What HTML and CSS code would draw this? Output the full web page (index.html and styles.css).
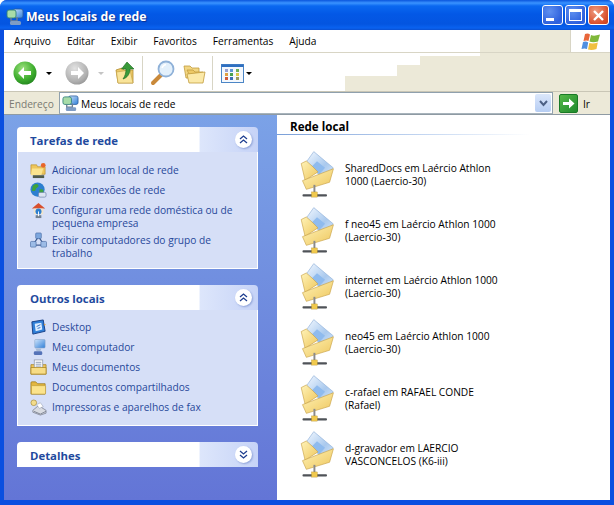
FILE: index.html
```html
<!DOCTYPE html>
<html lang="pt">
<head>
<meta charset="utf-8">
<title>Meus locais de rede</title>
<link rel="stylesheet" href="styles.css">
</head>
<body>
<svg class="defs" width="0" height="0" aria-hidden="true">
  <defs>
    <linearGradient id="fold" x1="0" y1="0" x2="1" y2="1"><stop offset="0" stop-color="#fff3b8"/><stop offset="1" stop-color="#eec65c"/></linearGradient>
    <linearGradient id="paper" x1="0" y1="0" x2="1" y2="1"><stop offset="0" stop-color="#f4f9ff"/><stop offset=".6" stop-color="#a9c9ee"/><stop offset="1" stop-color="#d8e8fa"/></linearGradient>
    <radialGradient id="green" cx=".4" cy=".3" r=".8"><stop offset="0" stop-color="#9be07c"/><stop offset=".6" stop-color="#3fae2e"/><stop offset="1" stop-color="#1d7d1c"/></radialGradient>
    <radialGradient id="grey" cx=".4" cy=".3" r=".8"><stop offset="0" stop-color="#e2e2e2"/><stop offset=".7" stop-color="#b0b0b0"/><stop offset="1" stop-color="#8e8e8e"/></radialGradient>
    <linearGradient id="scr" x1="0" y1="0" x2="1" y2="1"><stop offset="0" stop-color="#cfe4fb"/><stop offset="1" stop-color="#2f7fd8"/></linearGradient>

    <symbol id="net-folder" viewBox="30 10 110 155">
      <path d="M75 15 135 65 105 98 50 50Z" fill="url(#paper)" stroke="#8fb0d8" stroke-width="2"/>
      <path d="M85 45 110 65 92 85 68 62Z" fill="#8fbbee"/>
      <path d="M36 52 52 44 72 62 88 78 48 104Z" fill="url(#fold)" stroke="#c9a246" stroke-width="2"/>
      <path d="M40 105 136 68 124 110 52 132Z" fill="url(#fold)" stroke="#c9a246" stroke-width="2"/>
      <rect x="74" y="118" width="6" height="30" fill="#8a8a8a"/>
      <rect x="40" y="147" width="76" height="7" rx="3" fill="#4f5358"/>
      <rect x="68" y="140" width="18" height="16" fill="#f0c94e" stroke="#a98420"/>
    </symbol>

    <symbol id="net-places" viewBox="0 0 18 18">
      <rect x="7" y="1" width="10" height="9" rx="2" fill="url(#scr)" stroke="#2a5a9a" stroke-width=".8"/>
      <rect x="1" y="2" width="9" height="8" rx="2" fill="#a8dca8" stroke="#2f7f7a" stroke-width=".9"/>
      <path d="M5 10v3h6V9" stroke="#6d7f90" stroke-width="1.400" fill="none"/>
      <rect x="4" y="13" width="11" height="4" rx="1.500" fill="#7f9cc4"/>
    </symbol>

    <symbol id="i-add" viewBox="0 0 18 18">
      <path d="M1 3h6l1 2h8v8H1Z" fill="#eec65c" stroke="#b98f2a" stroke-width=".7"/>
      <path d="M2 7h12l-2 7H1Z" fill="#fbe48f"/>
      <circle cx="14" cy="3.500" r="2.500" fill="#e8662a"/>
      <rect x="3" y="14" width="12" height="3" fill="#4f5a4a"/>
    </symbol>
    <symbol id="i-conn" viewBox="0 0 18 18">
      <circle cx="8" cy="8" r="7.500" fill="#2d7fd0"/>
      <path d="M3 4c3-3 6-2 6 0s-3 2-3 4-3 2-4 1ZM10 8c3-1 5 0 4 3s-3 3-4 1Z" fill="#3fa33a"/>
      <rect x="9" y="11" width="8" height="5" rx="1.500" fill="#dbe4f2" stroke="#6b7ea5" stroke-width=".7"/>
    </symbol>
    <symbol id="i-home" viewBox="0 0 18 18">
      <path d="M9 1 16 7H2Z" fill="#d8502e"/>
      <rect x="4" y="7" width="10" height="6" fill="#f2e4c8"/>
      <circle cx="9" cy="10" r="3.200" fill="#2d7fd0"/>
      <rect x="6" y="14" width="6" height="3" fill="#72808f"/>
      <path d="M9 10v5" stroke="#fff"/>
    </symbol>
    <symbol id="i-group" viewBox="0 0 18 18">
      <path d="M9 5 3.500 13M9 5l5.500 8M4 14h10" stroke="#415e92" stroke-width="1.300"/>
      <rect x="6" y="1" width="6" height="6" rx="1" fill="#7da7de" stroke="#3d5f9a" stroke-width=".6"/>
      <rect x="0.500" y="10" width="6" height="6" rx="1" fill="#9cbbe6" stroke="#3d5f9a" stroke-width=".6"/>
      <rect x="11.500" y="10" width="6" height="6" rx="1" fill="#9cbbe6" stroke="#3d5f9a" stroke-width=".6"/>
    </symbol>
    <symbol id="i-desk" viewBox="0 0 18 18">
      <path d="M2 3 14 1 16 13 3 16Z" fill="#2f7fd8" stroke="#173f86"/>
      <path d="M5 5 12 4 13 11 6 13Z" fill="#dcecff"/>
      <path d="M7 8 11 6M8 10l3-1" stroke="#2f6fc0"/>
      <path d="m15 5 2 1-2 1Z" fill="#e8a02a"/>
    </symbol>
    <symbol id="i-pc" viewBox="0 0 18 18">
      <rect x="5" y="0.500" width="11" height="9" rx="1" fill="url(#scr)" stroke="#8ba6c8" stroke-width=".6"/>
      <path d="M6 10h6l-1 3H7Z" fill="#a9bcd6"/>
      <rect x="4" y="13" width="9" height="4" rx="1.500" fill="#5573b8"/>
    </symbol>
    <symbol id="i-docs" viewBox="0 0 18 18">
      <path d="M1 6h16v10H1Z" fill="#eec65c" stroke="#a98420" stroke-width=".8"/>
      <rect x="4.500" y="1" width="9" height="9" fill="#fff" stroke="#8d96a8" stroke-width=".8"/>
      <path d="M6 3.500h6M6 5.500h6M6 7.500h6" stroke="#6d7f9f" stroke-width=".8"/>
      <path d="M1 9h16v7H1Z" fill="#f7dc85" stroke="#a98420" stroke-width=".8"/>
    </symbol>
    <symbol id="i-shared" viewBox="0 0 18 18">
      <path d="M1 4q0-1 1-1h4l2 2h8v11H1Z" fill="#e3b640" stroke="#9c7a1c" stroke-width=".8"/>
      <rect x="1.500" y="7" width="15" height="9" rx="1" fill="#fbe38c" stroke="#b48f28" stroke-width=".6"/>
    </symbol>
    <symbol id="i-print" viewBox="0 0 18 18">
      <circle cx="4" cy="4" r="3" fill="#f3dc8c" stroke="#a48a3a" stroke-width=".7"/>
      <path d="M3 12 9 7l8 5v3l-6 2-8-3Z" fill="#d8dbe2" stroke="#6d7483" stroke-width=".7"/>
      <path d="M7 6l4-2 3 4-4 2Z" fill="#fff" stroke="#8a92a3" stroke-width=".5"/>
      <path d="M4 13l7 3 6-3" fill="none" stroke="#7d8595"/>
    </symbol>
  </defs>
</svg>

<div class="window">
  <header class="titlebar">
    <svg class="title-icon"><use href="#net-places"/></svg>
    <span class="title-text">Meus locais de rede</span>
    <div class="caption-buttons">
      <button class="cap cap-min" aria-label="Minimizar"><span class="min-bar"></span></button>
      <button class="cap cap-max" aria-label="Maximizar"><span class="max-box"></span></button>
      <button class="cap cap-close" aria-label="Fechar">
        <svg width="13" height="13" viewBox="0 0 13 13"><path d="M2 2 11 11M11 2 2 11" stroke="#fff" stroke-width="2.400"/></svg>
      </button>
    </div>
  </header>

  <div class="inner">
    <nav class="menubar">
      <ul class="menu">
        <li>Arquivo</li><li>Editar</li><li>Exibir</li><li>Favoritos</li><li>Ferramentas</li><li>Ajuda</li>
      </ul>
      <div class="logo">
        <svg width="21" height="18" viewBox="0 0 21 18">
          <path d="M5 1Q8 0 10 1.500L8.500 8Q6.500 7 3.500 8Z" fill="#e8663a"/>
          <path d="M11 2Q14 3.500 20 1.500L18 8.500Q13 10 9.500 8.500Z" fill="#7fb83a"/>
          <path d="M3 9Q6 8 8.200 9.500L7 16Q4.500 15 1.500 16Z" fill="#4f8fe0"/>
          <path d="M9.300 10Q13 11 17.800 9.500L16.500 16Q12 17.500 8 16.500Z" fill="#f0c040"/>
        </svg>
      </div>
    </nav>

    <div class="toolbar">
      <svg class="tb-back" width="24" height="24" viewBox="0 0 24 24">
        <circle cx="12" cy="12" r="11.500" fill="url(#green)"/>
        <path d="M5 12 11 6v4h7v4h-7v4Z" fill="#fff"/>
      </svg>
      <span class="caret"></span>
      <svg class="tb-fwd" width="24" height="24" viewBox="0 0 24 24">
        <circle cx="12" cy="12" r="11.500" fill="url(#grey)"/>
        <path d="M19 12 13 6v4H6v4h7v4Z" fill="#fff"/>
      </svg>
      <span class="caret caret-off"></span>
      <svg class="tb-up" width="20" height="24" viewBox="0 0 20 24">
        <path d="M1 9 7 7l2 2h9v13H3Z" fill="#edc967" stroke="#b38d30" stroke-width=".8"/>
        <path d="M1.500 11 15 9l3 13H3Z" fill="#f9e49a" stroke="#c39f41" stroke-width=".6"/>
        <path d="M12 1 19 8h-4c0 5-3 9-7 10 2-3 3-6 3-10H6.500Z" fill="#3a9a3a" stroke="#17661b" stroke-width=".6"/>
      </svg>
      <span class="sep"></span>
      <svg class="tb-search" width="26" height="26" viewBox="0 0 26 26">
        <path d="M11 15 3 23" stroke="#c9893a" stroke-width="4" stroke-linecap="round"/>
        <circle cx="16" cy="9" r="7.500" fill="#e3f0fb" stroke="#8fb1d8" stroke-width="1.800"/>
        <path d="M12 8q1-3 4-3.500" stroke="#fff" stroke-width="1.500" fill="none"/>
      </svg>
      <svg class="tb-folders" width="23" height="20" viewBox="0 0 23 20">
        <path d="M1 2h6l2 2h7v10H3Z" fill="#f2d682" stroke="#c19c3e" stroke-width=".8"/>
        <path d="M4 6h6l2 2h8v2H6Z" fill="#edc967" stroke="#c19c3e" stroke-width=".8"/>
        <path d="M4 10 22 8l-2 11H6Z" fill="#fbe9a8" stroke="#c19c3e" stroke-width=".8"/>
      </svg>
      <span class="sep sep-2"></span>
      <svg class="tb-views" width="23" height="19" viewBox="0 0 23 19">
        <rect x=".5" y=".5" width="22" height="18" fill="#f4f8fd" stroke="#4c86c6"/>
        <rect x=".5" y=".5" width="22" height="2.500" fill="#2e6fc0"/>
        <rect x="4" y="5" width="3" height="3" fill="#9a9fd0"/><rect x="9" y="5" width="3" height="3" fill="#5f97d8"/><rect x="15" y="5" width="3" height="3" fill="#6dae5a"/>
        <rect x="4" y="9" width="3" height="3" fill="#e0a040"/><rect x="9" y="9" width="3" height="3" fill="#45a050"/><rect x="15" y="9" width="3" height="3" fill="#d9c84a"/>
        <rect x="4" y="13" width="3" height="3" fill="#d05a3a"/><rect x="9" y="13" width="3" height="3" fill="#3b6fb8"/><rect x="15" y="13" width="3" height="3" fill="#9a9a60"/>
      </svg>
      <span class="caret caret-views"></span>
    </div>

    <div class="addressbar">
      <span class="addr-label">Endereço</span>
      <div class="addr-box">
        <svg class="addr-icon"><use href="#net-places"/></svg>
        <span class="addr-text">Meus locais de rede</span>
        <span class="addr-drop">
          <svg width="9" height="7" viewBox="0 0 9 7"><path d="M1 1 4.500 5 8 1" fill="none" stroke="#4d6185" stroke-width="2"/></svg>
        </span>
      </div>
      <span class="go-btn">
        <svg width="13" height="13" viewBox="0 0 13 13"><path d="M1 5h6V1.500L12.500 6.500 7 11.500V8H1Z" fill="#fff"/></svg>
      </span>
      <span class="go-text">Ir</span>
    </div>

    <div class="content">
      <aside class="sidebar">
        <section class="panel">
          <div class="panel-head">
            <h2>Tarefas de rede</h2>
            <span class="chev"><svg width="9" height="9" viewBox="0 0 9 9"><path d="M1 4 4.500 1 8 4M1 8l3.500-3L8 8" fill="none" stroke="#1f3f90" stroke-width="1.300"/></svg></span>
          </div>
          <ul class="panel-body">
            <li><svg class="ico"><use href="#i-add"/></svg><span>Adicionar um local de rede</span></li>
            <li><svg class="ico"><use href="#i-conn"/></svg><span>Exibir conexões de rede</span></li>
            <li><svg class="ico"><use href="#i-home"/></svg><span>Configurar uma rede doméstica ou de pequena empresa</span></li>
            <li><svg class="ico"><use href="#i-group"/></svg><span>Exibir computadores do grupo de trabalho</span></li>
          </ul>
        </section>
        <section class="panel">
          <div class="panel-head">
            <h2>Outros locais</h2>
            <span class="chev"><svg width="9" height="9" viewBox="0 0 9 9"><path d="M1 4 4.500 1 8 4M1 8l3.500-3L8 8" fill="none" stroke="#1f3f90" stroke-width="1.300"/></svg></span>
          </div>
          <ul class="panel-body">
            <li><svg class="ico"><use href="#i-desk"/></svg><span>Desktop</span></li>
            <li><svg class="ico"><use href="#i-pc"/></svg><span>Meu computador</span></li>
            <li><svg class="ico"><use href="#i-docs"/></svg><span>Meus documentos</span></li>
            <li><svg class="ico"><use href="#i-shared"/></svg><span>Documentos compartilhados</span></li>
            <li><svg class="ico"><use href="#i-print"/></svg><span>Impressoras e aparelhos de fax</span></li>
          </ul>
        </section>
        <section class="panel">
          <div class="panel-head">
            <h2>Detalhes</h2>
            <span class="chev"><svg width="9" height="9" viewBox="0 0 9 9"><path d="M1 1l3.500 3L8 1M1 5l3.500 3L8 5" fill="none" stroke="#1f3f90" stroke-width="1.300"/></svg></span>
          </div>
        </section>
      </aside>

      <main class="files">
        <h1 class="group-title">Rede local</h1>
        <div class="group-rule"></div>
        <ul class="file-list">
          <li><svg class="big"><use href="#net-folder"/></svg><span>SharedDocs em Laércio Athlon 1000 (Laercio-30)</span></li>
          <li><svg class="big"><use href="#net-folder"/></svg><span>f neo45 em Laércio Athlon 1000 (Laercio-30)</span></li>
          <li><svg class="big"><use href="#net-folder"/></svg><span>internet em Laércio Athlon 1000 (Laercio-30)</span></li>
          <li><svg class="big"><use href="#net-folder"/></svg><span>neo45 em Laércio Athlon 1000 (Laercio-30)</span></li>
          <li><svg class="big"><use href="#net-folder"/></svg><span>c-rafael em RAFAEL CONDE (Rafael)</span></li>
          <li><svg class="big"><use href="#net-folder"/></svg><span>d-gravador em LAERCIO VASCONCELOS (K6-iii)</span></li>
        </ul>
      </main>
    </div>
  </div>
</div>
</body>
</html>
```

FILE: styles.css
```css
* { box-sizing: border-box; }
html, body { margin: 0; padding: 0; background: #fff; }
body { font-family: "Open Sans", "Noto Sans", "Liberation Sans", sans-serif; font-size: 10.2px; color: #000; overflow: hidden; }
.defs { display: block; height: 0; }
ul { list-style: none; margin: 0; padding: 0; }
h1, h2 { margin: 0; }

.window { width: 614px; height: 505px; display: flex; flex-direction: column; background: #0a4fe0; border-radius: 7px 7px 0 0; overflow: hidden; }

.titlebar { height: 30px; flex: none; display: flex; align-items: center; padding: 3px 5px 0 6px;
  background: linear-gradient(180deg, #0a55dd 0, #3a93ff 3px, #0a68f0 6px, #0358e6 14px, #0455e0 24px, #0a62f0 28px, #0a4fd0 30px); }
.title-icon { width: 18px; height: 18px; flex: none; margin-right: 2px; }
.title-text { font: bold 12.3px "Open Sans", "Noto Sans", sans-serif; color: #fff; text-shadow: 1px 1px 1px #0a2f90; flex: 1; }
.caption-buttons { display: flex; gap: 2px; align-items: center; margin-top: -3px; }
.cap { width: 21px; height: 20px; padding: 0; border: 1px solid #fff; border-radius: 3px; display: flex; align-items: center; justify-content: center; background: radial-gradient(circle at 35% 30%, #5f90f0, #2c5fdc 75%, #3a6ee6); }
.cap-close { background: radial-gradient(circle at 35% 30%, #ee9a80, #d9502c 70%, #c43f1e); }
.min-bar { width: 8px; height: 3px; background: #fff; margin: 9px 6px 0 0; }
.max-box { width: 13px; height: 12px; border: 1px solid #fff; border-top-width: 3px; }

.inner { flex: 1; min-height: 0; margin: 0 4px 5px 4px; display: flex; flex-direction: column; background: #ece9d8; }

.menubar { height: 23px; flex: none; display: flex; justify-content: space-between; border-bottom: 1px solid #d8d5c5;
  background: linear-gradient(#fff, #fff) no-repeat 0 0 / 476px 100%, #ece9d8; }
.menu { display: flex; align-items: center; padding: 0 0 1px 10px; gap: 16px; }
.logo { width: 40px; background: #fff; border-left: 1px solid #d8d5c5; display: flex; align-items: center; justify-content: center; padding-top: 2px; }

.toolbar { height: 39px; flex: none; display: flex; align-items: center; padding: 2px 0 0 9px; border-bottom: 1px solid #c9c6b6;
  background:
    linear-gradient(#fff, #fff) no-repeat 0 0 / 476px 3px,
    linear-gradient(#fff, #fff) no-repeat 0 3px / 416px 9px,
    linear-gradient(#fff, #fff) no-repeat 0 12px / 393px 11px,
    linear-gradient(#fff, #fff) no-repeat 0 23px / 341px 16px,
    #ece9d8; }
.caret { width: 0; height: 0; border: 3px solid transparent; border-top: 3px solid #000; border-bottom: 0; margin: 0 13px 0 9px; }
.caret-off { border-top-color: #c4c4c4; margin: 0 11px 0 9px; }
.caret-views { margin: 0 0 0 2px; }
.tb-up { margin-top: -1px; }
.sep { width: 1px; height: 34px; background: #d8d5c5; margin: 0 7px 0 7px; }
.tb-search { margin-right: 7px; }
.tb-folders { margin-top: 2px; }
.sep-2 { margin: 0 8px 0 6px; }

.addressbar { height: 22px; flex: none; display: flex; align-items: center; padding-left: 5px; background: #ece9d8; }
.addr-label { width: 50px; color: #7a7a72; padding-top: 2px; }
.addr-box { width: 494px; height: 22px; background: #fff; border: 1px solid #8fa0ad; border-bottom-color: #a8b4bc; display: flex; align-items: center; padding: 0 1px 0 2px; }
.addr-icon { width: 17px; height: 17px; margin-right: 2px; flex: none; }
.addr-text { flex: 1; padding-top: 2px; }
.addr-drop { width: 16px; height: 18px; background: linear-gradient(#dbe7fb, #b6cdf3); border-radius: 2px; display: flex; align-items: center; justify-content: center; }
.go-btn { width: 19px; height: 19px; margin-left: 6px; border-radius: 2px; background: linear-gradient(135deg, #55b848, #1f8a2c); border: 1px solid #197a26; display: flex; align-items: center; justify-content: center; }
.go-text { margin-left: 5px; padding-top: 1px; }

.content { flex: 1; min-height: 0; display: flex; border-top: 1px solid #8e9aa3; }
.sidebar { width: 273px; flex: none; padding: 12px 19px 0 13px; display: flex; flex-direction: column; gap: 16px; background: linear-gradient(#7ba2e7, #6375d6); }
.panel-head { height: 25px; padding: 2px 6px 0 13px; display: flex; align-items: center; justify-content: space-between; border-radius: 4px 4px 0 0;
  background: linear-gradient(90deg, #fff 75.500%, #dde6fb 76%, #c6d3f7 100%); }
.panel-head h2 { font: bold 11.4px "Open Sans", "Noto Sans", sans-serif; color: #1f4a9e; }
.chev { width: 17px; height: 17px; border-radius: 50%; background: #fff; box-shadow: 1px 1px 2px #8fa3d8; display: flex; align-items: center; justify-content: center; margin-top: -3px; }
.panel-body { background: #d6dff7; border: 1px solid #fff; border-width: 0 1px 1px; padding: 11px 13px 8px 12px; display: flex; flex-direction: column; gap: 4px; color: #27489a; }
.panel-body li { display: flex; line-height: 13px; min-height: 16px; }
.panel:first-child .panel-body { padding-top: 12px; }
.ico { width: 17px; height: 17px; flex: none; margin: -2px 5px -2px 0; }

.files { flex: 1; background: #fff; min-width: 0; }
.group-title { font: bold 11.600px "Open Sans", "Noto Sans", sans-serif; color: #000; margin: 4px 0 0 13px; line-height: 15px; }
.group-rule { width: 253px; height: 1px; background: linear-gradient(90deg, #7a9fd8, #c6d8f2 60%, #fff); }
.file-list { padding: 15px 0 0 22px; display: flex; flex-direction: column; gap: 6px; }
.file-list li { display: flex; align-items: center; height: 50px; }
.file-list span { width: 165px; line-height: 13px; margin-top: 0; }
.big { width: 38px; height: 50px; flex: none; margin: 0 9px 0 -1px; }
```
